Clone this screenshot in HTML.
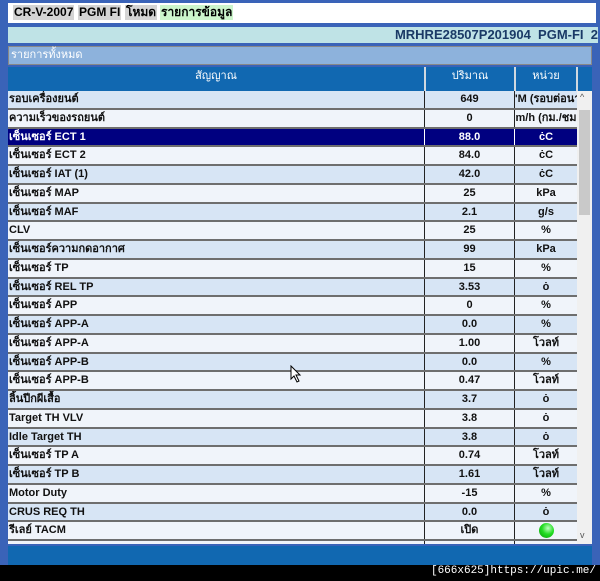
<!DOCTYPE html>
<html><head><meta charset="utf-8"><style>
*{margin:0;padding:0;box-sizing:border-box}
body{width:600px;height:581px;background:#000;position:relative;overflow:hidden;font-family:"Liberation Sans","Noto Sans CJK SC",sans-serif}
.win{position:absolute;left:0;top:0;width:600px;height:565px;background:#3a63b8}
.title{position:absolute;left:8px;top:3px;width:588px;height:20px;background:#fff;font-size:12px;font-weight:bold}
.title span{position:absolute;top:2px;padding:0 1px;line-height:15px;white-space:nowrap}
.cyan{position:absolute;left:8px;top:27px;width:590px;height:16px;background:#bfe3e6;font-size:13px;font-weight:bold;color:#1a3a66;text-align:right;line-height:16px;white-space:nowrap;overflow:hidden}
.all{position:absolute;left:8px;top:46px;width:584px;height:19px;background:#8db2dc;border:1px solid #888;color:#fff;font-size:11px;line-height:17px;padding-left:2px}
.hdr{position:absolute;left:8px;top:67px;width:584px;height:24px;background:#1168b1;color:#fff;font-size:11px}
.hdr div{position:absolute;top:0;height:24px;line-height:18px;text-align:center;border-right:2px solid #d0d8e0}
.rows{position:absolute;left:8px;top:91px;width:569px;height:453px;overflow:hidden;background:#f0f4fa}
.r{height:18.75px;border-bottom:2px solid #6e6e6e;display:flex;font-size:11px;font-weight:bold;color:#111;line-height:16px}
.r div{overflow:hidden;white-space:nowrap}
.a{width:417px;padding-left:1px;border-right:1px solid #222}
.b{width:90px;text-align:center;border-right:1px solid #222}
.c{width:62px;text-align:center}
.o{background:#d7e5f5}.e{background:#f0f4fa}
.s{background:#000080;color:#fff}
.sb{position:absolute;left:577px;top:91px;width:15px;height:453px;background:#f0f0f0}
.thumb{position:absolute;left:579px;top:110px;width:11px;height:105px;background:#c9c9c9}
.bot{position:absolute;left:8px;top:546px;width:584px;height:19px;background:#1168b1}
.rb{position:absolute;left:592px;top:0;width:8px;height:565px;background:#3a63b8}
</style></head><body>
<div class="win"></div>
<div class="rb"></div>
<div class="title">
<span style="left:5px;background:#d4d4d4">CR-V-2007</span>
<span style="left:70px;background:#d4d4d4">PGM FI</span>
<span style="left:117px;background:#d4d4d4">โหมด</span>
<span style="left:152px;background:#ccf5cc">รายการข้อมูล</span>
</div>
<div class="cyan">MRHRE28507P201904&nbsp; PGM-FI&nbsp; 2</div>
<div class="all">รายการทั้งหมด</div>
<div class="hdr">
<div style="left:0;width:418px">สัญญาณ</div>
<div style="left:418px;width:90px">ปริมาณ</div>
<div style="left:508px;width:62px">หน่วย</div>
</div>
<div class="rows">
<div class="r o"><div class="a">รอบเครื่องยนต์</div><div class="b">649</div><div class="c">'M (รอบต่อนา</div></div>
<div class="r e"><div class="a">ความเร็วของรถยนต์</div><div class="b">0</div><div class="c">m/h (กม./ชม</div></div>
<div class="r s"><div class="a" style="border-color:#fff">เซ็นเซอร์ ECT 1</div><div class="b" style="border-color:#fff">88.0</div><div class="c">ċC</div></div>
<div class="r e"><div class="a">เซ็นเซอร์ ECT 2</div><div class="b">84.0</div><div class="c">ċC</div></div>
<div class="r o"><div class="a">เซ็นเซอร์ IAT (1)</div><div class="b">42.0</div><div class="c">ċC</div></div>
<div class="r e"><div class="a">เซ็นเซอร์ MAP</div><div class="b">25</div><div class="c">kPa</div></div>
<div class="r o"><div class="a">เซ็นเซอร์ MAF</div><div class="b">2.1</div><div class="c">g/s</div></div>
<div class="r e"><div class="a">CLV</div><div class="b">25</div><div class="c">%</div></div>
<div class="r o"><div class="a">เซ็นเซอร์ความกดอากาศ</div><div class="b">99</div><div class="c">kPa</div></div>
<div class="r e"><div class="a">เซ็นเซอร์ TP</div><div class="b">15</div><div class="c">%</div></div>
<div class="r o"><div class="a">เซ็นเซอร์ REL TP</div><div class="b">3.53</div><div class="c">ȯ</div></div>
<div class="r e"><div class="a">เซ็นเซอร์ APP</div><div class="b">0</div><div class="c">%</div></div>
<div class="r o"><div class="a">เซ็นเซอร์ APP-A</div><div class="b">0.0</div><div class="c">%</div></div>
<div class="r e"><div class="a">เซ็นเซอร์ APP-A</div><div class="b">1.00</div><div class="c">โวลท์</div></div>
<div class="r o"><div class="a">เซ็นเซอร์ APP-B</div><div class="b">0.0</div><div class="c">%</div></div>
<div class="r e"><div class="a">เซ็นเซอร์ APP-B</div><div class="b">0.47</div><div class="c">โวลท์</div></div>
<div class="r o"><div class="a">ลิ้นปีกผีเสื้อ</div><div class="b">3.7</div><div class="c">ȯ</div></div>
<div class="r e"><div class="a">Target TH VLV</div><div class="b">3.8</div><div class="c">ȯ</div></div>
<div class="r o"><div class="a">Idle Target TH</div><div class="b">3.8</div><div class="c">ȯ</div></div>
<div class="r e"><div class="a">เซ็นเซอร์ TP A</div><div class="b">0.74</div><div class="c">โวลท์</div></div>
<div class="r o"><div class="a">เซ็นเซอร์ TP B</div><div class="b">1.61</div><div class="c">โวลท์</div></div>
<div class="r e"><div class="a">Motor Duty</div><div class="b">-15</div><div class="c">%</div></div>
<div class="r o"><div class="a">CRUS REQ TH</div><div class="b">0.0</div><div class="c">ȯ</div></div>
<div class="r e"><div class="a">รีเลย์ TACM</div><div class="b">เปิด</div><div class="c"><span style="display:inline-block;width:15px;height:15px;border-radius:50%;background:radial-gradient(circle at 60% 35%,#bfffbf,#22dd22 45%,#0a9a0a);margin-top:1px"></span></div></div>
<div class="r e"><div class="a"></div><div class="b"></div><div class="c"></div></div>
</div>
<div class="sb"></div>
<div class="thumb"></div>
<div style="position:absolute;left:580px;top:92px;font-size:9px;color:#555">^</div>
<div style="position:absolute;left:580px;top:530px;font-size:9px;color:#555">v</div>
<div class="bot"></div>
<div style="position:absolute;right:4px;top:565px;color:#fff;font-size:11px;font-family:'Liberation Mono',monospace">[666x625]https://upic.me/</div>
<svg style="position:absolute;left:290px;top:365px" width="12" height="18"><path d="M1 1 L1 14 L4 11 L7 17 L9 16 L6 10 L10 10 Z" fill="#fff" stroke="#000"/></svg>
</body></html>
